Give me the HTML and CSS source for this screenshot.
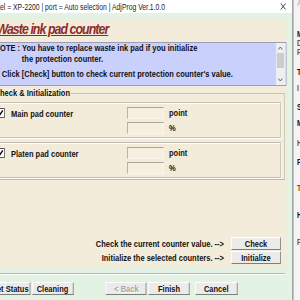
FILE: index.html
```html
<!DOCTYPE html>
<html lang="en">
<head>
    <meta charset="UTF-8">
    <meta name="viewport" content="width=device-width, initial-scale=1.0">
    <title>Waste ink pad counter</title>
    <link rel="stylesheet" href="styles.css">
</head>
<body>
    <div class="screen">
        <div class="window">
            <div class="titlebar">
                <span class="title">Model = XP-2200 | port = Auto selection | AdjProg Ver.1.0.0</span>
                <svg class="close" width="8" height="7" viewBox="0 0 8 7">
                    <path d="M1 0.5 L7 6.5 M7 0.5 L1 6.5" stroke="#333" stroke-width="1" fill="none"/>
                </svg>
            </div>

            <div class="client">
                <div class="panel">
                    <h1 class="heading">Waste ink pad counter</h1>

                    <div class="note">
                        <div class="note-text">
                            <p>NOTE : You have to replace waste ink pad if you initialize</p>
                            <p class="indent">the protection counter.</p>
                            <p class="spaced">Click [Check] button to check current protection counter's value.</p>
                        </div>
                        <div class="scrollbar">
                            <svg class="arrow" width="9" height="6" viewBox="0 0 9 6"><path d="M2 4.5 L4.5 2 L7 4.5" stroke="#555" fill="none"/></svg>
                            <span class="thumb"></span>
                            <span class="track"></span>
                            <svg class="arrow" width="9" height="6" viewBox="0 0 9 6"><path d="M2 1.5 L4.5 4 L7 1.5" stroke="#555" fill="none"/></svg>
                        </div>
                    </div>

                    <fieldset class="group">
                        <legend>Check &amp; Initialization</legend>

                        <div class="counter">
                            <div class="counter-head">
                                <span class="checkbox">
                                    <svg width="9" height="8" viewBox="0 0 9 8"><path d="M1.5 3.5 L3.5 6 L7.5 1.5" stroke="#000" stroke-width="1.6" fill="none"/></svg>
                                </span>
                                <span class="counter-name">Main pad counter</span>
                            </div>
                            <div class="fields">
                                <input type="text" readonly>
                                <span class="unit">point</span>
                                <input type="text" readonly>
                                <span class="unit">%</span>
                            </div>
                        </div>

                        <div class="counter">
                            <div class="counter-head">
                                <span class="checkbox">
                                    <svg width="9" height="8" viewBox="0 0 9 8"><path d="M1.5 3.5 L3.5 6 L7.5 1.5" stroke="#000" stroke-width="1.6" fill="none"/></svg>
                                </span>
                                <span class="counter-name">Platen pad counter</span>
                            </div>
                            <div class="fields">
                                <input type="text" readonly>
                                <span class="unit">point</span>
                                <input type="text" readonly>
                                <span class="unit">%</span>
                            </div>
                        </div>
                    </fieldset>

                    <div class="actions">
                        <div class="action-row">
                            <span>Check the current counter value. --&gt;</span>
                            <button class="btn btn-wide">Check</button>
                        </div>
                        <div class="action-row">
                            <span>Initialize the selected counters. --&gt;</span>
                            <button class="btn btn-wide">Initialize</button>
                        </div>
                    </div>
                </div>

                <div class="separator"></div>

                <div class="buttons">
                    <button class="btn btn-status">Reset Status</button>
                    <button class="btn btn-cleaning">Cleaning</button>
                    <button class="btn btn-back" disabled>&lt; Back</button>
                    <button class="btn btn-finish">Finish</button>
                    <button class="btn btn-cancel">Cancel</button>
                </div>
            </div>
        </div>

        <div class="behind">
            <span class="faint">A</span>
            <span>M</span>
            <span class="brown">D</span>
            <span class="brown">F</span>
            <span>T</span>
            <span class="brown">I</span>
            <span>S</span>
            <span>M</span>
            <span class="brown">H</span>
            <span>F</span>
            <span class="brown">T</span>
            <span>H</span>
            <span class="brown">F</span>
        </div>
    </div>
</body>
</html>
```

FILE: styles.css
```css
* {
    margin: 0;
    padding: 0;
    box-sizing: border-box;
}

body {
    width: 300px;
    height: 300px;
    overflow: hidden;
    font-family: 'Liberation Sans', Arial, sans-serif;
    font-size: 9.4px;
    color: #111;
    background: #f0f0f0;
}

/* the screenshot is squeezed sideways, so everything is laid out 1.25x wide */
.screen {
    display: flex;
    width: 375px;
    height: 300px;
    transform: scaleX(0.8);
    transform-origin: 0 0;
}

.window {
    flex: none;
    width: 405px;
    margin-left: -40px;
    display: flex;
    flex-direction: column;
    background: #e4f2e3;
}

.titlebar {
    height: 13px;
    display: flex;
    align-items: center;
    justify-content: space-between;
    padding: 0 7px 0 23.5px;
    background: #fff;
}

.title {
    font-size: 8.5px;
    line-height: 12px;
    color: #222;
    white-space: nowrap;
}

.client {
    flex: 1;
    padding-top: 6px;
}

.panel {
    width: 393.5px;
    height: 248px;
    margin-left: 4px;
    display: flex;
    flex-direction: column;
    background: #f3ecda;
}

.heading {
    padding-left: 31.5px;
    font-size: 15.5px;
    line-height: 20px;
    letter-spacing: -1.2px;
    font-style: italic;
    font-weight: bold;
    color: #8e2c2c;
    text-decoration: underline;
    white-space: nowrap;
}

.note {
    height: 44px;
    margin: 3px 0 0 6px;
    display: flex;
    border: 1px solid #9a9db4;
    background: #c9d0fc;
}

.note-text {
    flex: 1;
    padding-left: 22.3px;
    font-weight: bold;
    line-height: 10.5px;
    white-space: nowrap;
}

.note-text .indent {
    padding-left: 34px;
}

.note-text .spaced {
    margin-top: 5px;
    padding-left: 9px;
}

.scrollbar {
    width: 11.6px;
    display: flex;
    flex-direction: column;
    align-items: center;
    background: #efefef;
}

.scrollbar .arrow {
    flex: none;
    margin: 2px 0;
}

.scrollbar .thumb {
    width: 9px;
    height: 15px;
    background: #cdcdcd;
}

.scrollbar .track {
    flex: 1;
}

.group {
    width: 372px;
    margin: 2px 0 0 20px;
    padding: 0 4px 1px 3px;
    border: 1px solid #c8c3b3;
    border-bottom-color: #bdb8a8;
}

.group legend {
    padding: 0 2px 0 5.2px;
    font-weight: bold;
    line-height: 10px;
    white-space: nowrap;
}

.counter {
    display: flex;
    margin-top: 4px;
    padding: 4px 0 3px 5.25px;
    border: 1px solid #c4bfb0;
    box-shadow: inset 1px 1px 0 #fff, 1px 1px 0 #fff;
}

.counter-head {
    width: 164.5px;
    height: 12px;
    display: flex;
    align-items: center;
}

.checkbox {
    width: 12px;
    height: 10px;
    display: flex;
    align-items: center;
    justify-content: center;
    border: 1px solid #555;
    background: #fff;
}

.counter-name {
    padding-left: 7.5px;
    font-weight: bold;
    white-space: nowrap;
}

.fields {
    display: grid;
    grid-template-columns: 46.25px auto;
    column-gap: 6.25px;
    row-gap: 3px;
    align-items: center;
}

.fields input {
    width: 46.25px;
    height: 12px;
    border: 1px solid;
    border-color: #a9a59a #f8f5ec #f8f5ec #a9a59a;
    background: #f5efdf;
    outline: none;
}

.unit {
    font-weight: bold;
    line-height: 12px;
}

.actions {
    margin-top: 57px;
    padding-right: 6.25px;
    display: flex;
    flex-direction: column;
    align-items: flex-end;
    gap: 1px;
}

.action-row {
    display: flex;
    align-items: center;
    gap: 8.75px;
    font-weight: bold;
    white-space: nowrap;
}

.btn {
    height: 13px;
    padding: 0;
    font-family: 'Liberation Sans', Arial, sans-serif;
    font-size: 9.4px;
    font-weight: bold;
    color: #111;
    background: #ebebeb;
    border: 1px solid;
    border-color: #fff #7d7d7d #7d7d7d #fff;
    white-space: nowrap;
}

.btn:disabled {
    color: #a3a3a3;
    text-shadow: 1px 1px 0 #fff;
}

.btn-wide {
    width: 62.5px;
}

.separator {
    margin: 6px 9px 0 4px;
    border-top: 1px solid #b8b8b2;
    border-bottom: 1px solid #fff;
}

.buttons {
    display: flex;
    margin-top: 6.5px;
    padding-left: 16.4px;
}

.btn-status {
    width: 62px;
}

.btn-cleaning {
    width: 52px;
    margin-left: 1.2px;
}

.btn-back {
    width: 51px;
    margin-left: 40.9px;
}

.btn-finish {
    width: 52px;
    margin-left: 1.9px;
}

.btn-cancel {
    width: 53px;
    margin-left: 6.4px;
}

.behind {
    flex: none;
    width: 10px;
    display: flex;
    flex-direction: column;
    padding-left: 4.25px;
    border-left: 2px solid #a3a3a3;
    background: #f4f4f4;
    font-size: 8.5px;
    font-weight: bold;
    line-height: 9px;
    overflow: hidden;
}

.behind span { display: block; }
.behind .faint { color: #b8b8b8; margin-top: -1.5px; }
.behind .brown { color: #8a4a1c; }
.behind span:nth-child(2) { margin-top: 22px; }
.behind span:nth-child(5) { margin-top: 11px; }
.behind span:nth-child(6) { margin-top: 7px; }
.behind span:nth-child(7) { margin-top: 10px; }
.behind span:nth-child(8) { margin-top: 7px; }
.behind span:nth-child(9) { margin-top: 11px; }
.behind span:nth-child(10) { margin-top: 10px; }
.behind span:nth-child(11) { margin-top: 17px; }
.behind span:nth-child(12) { margin-top: 18px; }
.behind span:nth-child(13) { margin-top: 18px; }
```
